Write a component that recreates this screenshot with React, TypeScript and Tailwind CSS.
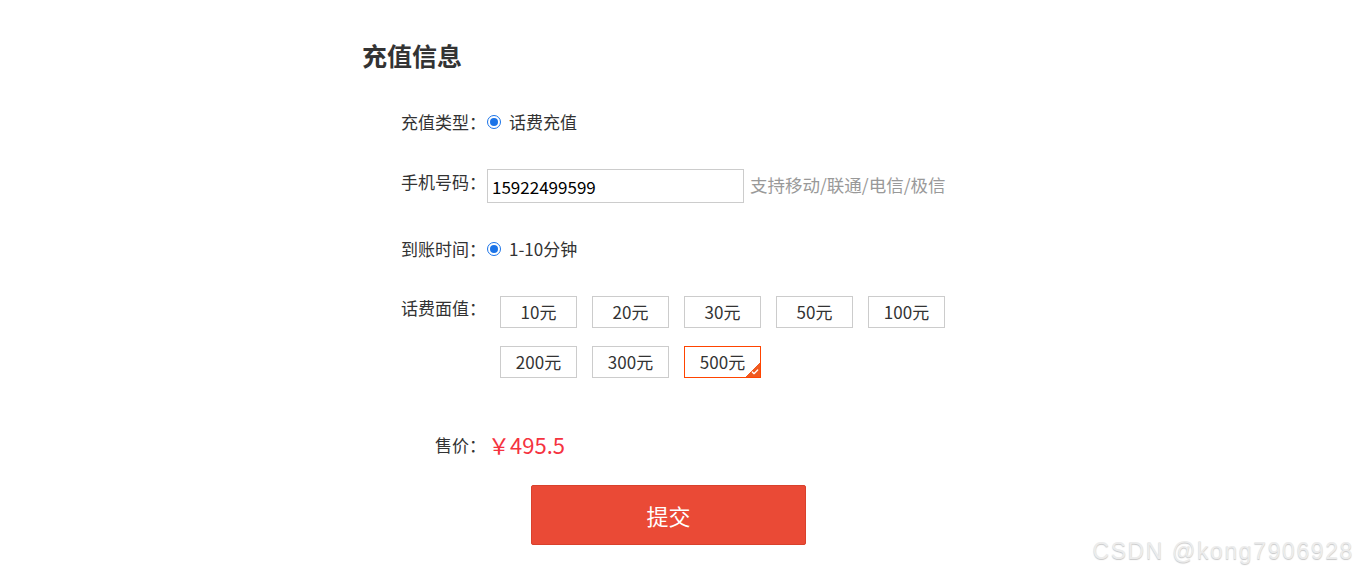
import { Check } from "lucide-react";

const amounts = ["10元", "20元", "30元", "50元", "100元", "200元", "300元", "500元"];

function Radio() {
  return (
    <span className="flex h-[14px] w-[14px] items-center justify-center rounded-full border-[1.5px] border-[#1a73e8] bg-white">
      <span className="h-[8px] w-[8px] rounded-full bg-[#1a73e8]" />
    </span>
  );
}

function Label({ children }: { children: React.ReactNode }) {
  return <div className="w-[86px] shrink-0 text-right text-[17px] text-[#333]">{children}</div>;
}

export default function App() {
  const selected = "500元";

  return (
    <div
      className="relative h-[577px] w-full overflow-hidden bg-white text-[#333]"
      style={{ fontFamily: '"Microsoft YaHei", "Noto Sans CJK SC", "Noto Sans", sans-serif' }}
    >
      <div className="mx-auto w-[634px]">
        {/* Title */}
        <h1 className="pt-[37px] text-[25px] font-bold leading-[36px] text-[#333]">充值信息</h1>

        <div className="pl-[38px]">
          {/* 充值类型 */}
          <div className="mt-[36px] flex h-[26px] items-center">
            <Label>充值类型：</Label>
            <div className="ml-[1px] flex items-center gap-[8px]">
              <Radio />
              <span className="text-[17px]">话费充值</span>
            </div>
          </div>

          {/* 手机号码 */}
          <div className="mt-[34px] flex items-start">
            <Label>手机号码：</Label>
            <input
              readOnly
              value="15922499599"
              className="ml-[1px] h-[34px] w-[257px] border border-[#ccc] px-[4px] text-[17px] text-black outline-none"
            />
            <span className="ml-[6px] pt-[3px] text-[17.5px] text-[#999]">支持移动/联通/电信/极信</span>
          </div>

          {/* 到账时间 */}
          <div className="mt-[33px] flex h-[26px] items-center">
            <Label>到账时间：</Label>
            <div className="ml-[1px] flex items-center gap-[8px]">
              <Radio />
              <span className="text-[17px]">1-10分钟</span>
            </div>
          </div>

          {/* 话费面值 */}
          <div className="mt-[34px] flex items-start">
            <div className="mt-[-1px]">
              <Label>话费面值：</Label>
            </div>
            <div className="ml-[14px] grid w-[450px] grid-cols-[repeat(5,77px)] gap-x-[15px] gap-y-[18px]">
              {amounts.map((a) => (
                <div
                  key={a}
                  className={
                    a === selected
                      ? "relative flex h-[32px] items-center justify-center border border-[#ff4400] text-[17px] text-[#333]"
                      : "flex h-[32px] items-center justify-center border border-[#ccc] text-[17px] text-[#333]"
                  }
                >
                  {a}
                  {a === selected && (
                    <span className="absolute bottom-0 right-0 h-[15px] w-[15px] bg-[linear-gradient(135deg,transparent_50%,#f05a20_50%)]">
                      <Check className="absolute bottom-[1px] right-[1px] h-[8px] w-[8px] text-white" strokeWidth={4} />
                    </span>
                  )}
                </div>
              ))}
            </div>
          </div>

          {/* 售价 */}
          <div className="mt-[50px] flex items-center">
            <Label>售价：</Label>
            <span className="ml-[2px] text-[22px] text-[#f5333f]">￥495.5</span>
          </div>
        </div>

        {/* 提交 */}
        <button className="ml-[169px] mt-[24px] flex h-[60px] w-[275px] items-center justify-center rounded-[2px] border border-[#d9412c] bg-[#ea4a36] text-[22px] text-white">
          提交
        </button>
      </div>

      {/* watermark */}
      <div
        className="absolute bottom-[9px] right-[4px] text-[23px] font-normal tracking-[1.6px] text-[#ececec]"
        style={{ fontFamily: '"Liberation Sans", Arial, sans-serif', textShadow: "0 1px 1px #c8c8c8" }}
      >
        CSDN @kong7906928
      </div>
    </div>
  );
}
